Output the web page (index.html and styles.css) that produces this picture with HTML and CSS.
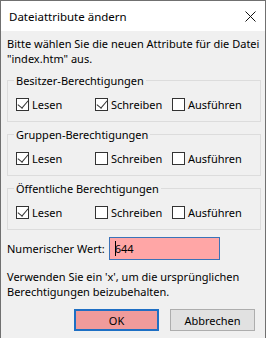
FILE: index.html
```html
<!DOCTYPE html>
<html lang="de">
<head>
  <meta charset="UTF-8">
  <title>Dateiattribute ändern</title>
  <link rel="stylesheet" href="styles.css">
</head>
<body>
  <div class="window">
    <div class="titlebar">
      <span class="title">Dateiattribute ändern</span>
      <svg class="close" width="11" height="11" viewBox="0 0 11 11">
        <path d="M0.5 0.5 L10.5 10.5 M10.5 0.5 L0.5 10.5" stroke="#111" stroke-width="1" fill="none"/>
      </svg>
    </div>
    <div class="content">
      <p class="intro">Bitte wählen Sie die neuen Attribute für die Datei<br>"index.htm" aus.</p>

      <div class="group">
        <span class="legend">Besitzer-Berechtigungen</span>
        <div class="row">
          <label class="check"><span class="box checked"></span>Lesen</label>
          <label class="check"><span class="box checked"></span>Schreiben</label>
          <label class="check"><span class="box"></span>Ausführen</label>
        </div>
      </div>

      <div class="group">
        <span class="legend">Gruppen-Berechtigungen</span>
        <div class="row">
          <label class="check"><span class="box checked"></span>Lesen</label>
          <label class="check"><span class="box"></span>Schreiben</label>
          <label class="check"><span class="box"></span>Ausführen</label>
        </div>
      </div>

      <div class="group">
        <span class="legend">Öffentliche Berechtigungen</span>
        <div class="row">
          <label class="check"><span class="box checked"></span>Lesen</label>
          <label class="check"><span class="box"></span>Schreiben</label>
          <label class="check"><span class="box"></span>Ausführen</label>
        </div>
      </div>

      <div class="numeric">
        <label for="value">Numerischer Wert:</label>
        <div class="field" id="value"><span class="caret"></span>644</div>
      </div>

      <p class="hint">Verwenden Sie ein 'x', um die ursprünglichen<br>Berechtigungen beizubehalten.</p>

      <div class="buttons">
        <button class="btn ok">OK</button>
        <button class="btn">Abbrechen</button>
      </div>
    </div>
  </div>
</body>
</html>
```

FILE: styles.css
```css
* {
  box-sizing: border-box;
}
body {
  margin: 0;
  background: #fff;
  font-family: "Noto Sans", sans-serif;
  font-size: 11px;
  color: #000;
}
.window {
  width: 266px;
  height: 338px;
  background: #f0f0f0;
  border: 1px solid #707070;
  border-bottom: none;
}
.titlebar {
  height: 30px;
  background: #fff;
  display: flex;
  align-items: center;
  justify-content: space-between;
  padding: 0 9px 0 8px;
}
.title {
  font-size: 11.5px;
}
.close {
  margin-top: 1px;
}
.content {
  padding: 5px 4px 0 6px;
}
.intro, .hint {
  margin: 0;
  line-height: 15px;
  white-space: nowrap;
}
.group {
  position: relative;
  height: 42px;
  margin-top: 12px;
  padding: 16px 0 0 8px;
  border: 1px solid #dcdcdc;
}
.intro + .group {
  margin-top: 14px;
}
.legend {
  position: absolute;
  top: -8px;
  left: 6px;
  padding: 0 2px;
  background: #f0f0f0;
  line-height: 15px;
}
.row {
  display: grid;
  grid-template-columns: 79px 77px auto;
}
.check {
  display: flex;
  align-items: center;
  gap: 3px;
  line-height: 15px;
}
.box {
  width: 13px;
  height: 13px;
  border: 1px solid #333;
  background: #fff;
  position: relative;
}
.box.checked::after {
  content: "";
  position: absolute;
  left: 3px;
  top: -1px;
  width: 5px;
  height: 9px;
  border-right: 1px solid #333;
  border-bottom: 1px solid #333;
  transform: rotate(40deg);
}
.numeric {
  display: flex;
  align-items: center;
  gap: 4px;
  margin-top: 7px;
}
.field {
  width: 111px;
  height: 23px;
  background: #ffa6a6;
  border: 1px solid #3a73b8;
  padding: 0 5px;
  line-height: 21px;
  position: relative;
}
.caret {
  position: absolute;
  left: 5px;
  top: 3px;
  width: 1px;
  height: 15px;
  background: #000;
}
.hint {
  margin-top: 9px;
}
.buttons {
  display: flex;
  justify-content: flex-end;
  gap: 11px;
  margin-top: 10px;
  padding-right: 6px;
}
.btn {
  width: 85px;
  height: 22px;
  font-family: "Noto Sans", sans-serif;
  font-size: 11px;
  color: #000;
  background: #e1e1e1;
  border: 1px solid #adadad;
  padding: 0;
}
.btn.ok {
  background: #f09b9b;
  border: 2px solid #1e6fc4;
}
```
